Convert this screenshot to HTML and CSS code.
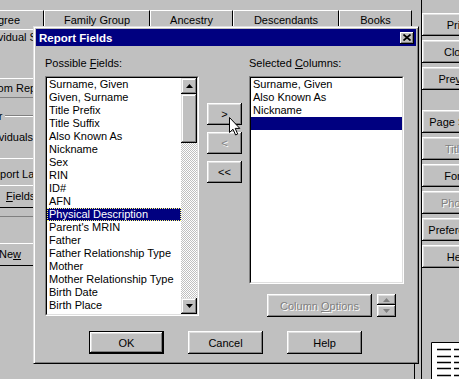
FILE: index.html
```html
<!DOCTYPE html>
<html>
<head>
<meta charset="utf-8">
<meta name="viewport" content="width=device-width, initial-scale=1.0"/>
<link rel="stylesheet" href="styles.css">
</head>
<body>
<div class="app">
    <div class="main">
        <div class="tabs">
            <div class="tab t-ped">Pedigree</div>
            <div class="tab t-fam">Family Group</div>
            <div class="tab t-anc">Ancestry</div>
            <div class="tab t-des">Descendants</div>
            <div class="tab t-bks">Books</div>
        </div>
        <div class="pane">
            <div class="side">
                <div class="tab2">Individual Summary</div>
                <div class="field">Custom Report</div>
                <div class="grp"><span>Filter</span><i class="etch"></i></div>
                <div class="lbl2">Individuals:</div>
                <div class="rpt">Report Layout</div>
                <div class="sbtn fields"><u>F</u>ields...</div>
                <div class="sline"></div>
                <div class="sbtn snew">Ne<u>w</u></div>
            </div>
        </div>
    </div>
    <div class="rightcol">
        <button class="btn rbtn">Print</button>
        <button class="btn rbtn">Close</button>
        <button class="btn rbtn"><span>Pre<u>v</u>iew</span></button>
        <button class="btn rbtn gap">Page Setup</button>
        <button class="btn rbtn off">Titles</button>
        <button class="btn rbtn">Fonts</button>
        <button class="btn rbtn off">Photos</button>
        <button class="btn rbtn">Preferences</button>
        <button class="btn rbtn">Help</button>
        <div class="doc">
            <svg width="28" height="39" viewBox="0 0 28 39">
                <rect x="0" y="0" width="28" height="39" fill="#fff"/>
                <path d="M0.5 39V0.5H28" stroke="#000" fill="none"/>
                <path d="M6 7.5h14M23 7.5h5M6 14.5h14M23 14.5h5M6 20.5h14M23 20.5h5M6 26.5h14M23 26.5h5M6 33.5h14M23 33.5h5" stroke="#000" stroke-width="1.4"/>
            </svg>
        </div>
    </div>
</div>

<div class="dialog">
    <div class="titlebar">
        <span>Report Fields</span>
        <span class="xbtn">
            <svg width="8" height="7" viewBox="0 0 8 7"><path d="M0.5 0.5L7.5 6.5M7.5 0.5L0.5 6.5" stroke="#000" stroke-width="1.7"/></svg>
        </span>
    </div>
    <div class="dbody">
        <div class="cols">
            <div class="col1">
                <div class="label">Possible <u>F</u>ields:</div>
                <div class="list l1">
                    <div class="list-in">
                        <div class="items">
                            <div class="item">Surname, Given</div>
                            <div class="item">Given, Surname</div>
                            <div class="item">Title Prefix</div>
                            <div class="item">Title Suffix</div>
                            <div class="item">Also Known As</div>
                            <div class="item">Nickname</div>
                            <div class="item">Sex</div>
                            <div class="item">RIN</div>
                            <div class="item">ID#</div>
                            <div class="item">AFN</div>
                            <div class="item sel">Physical Description</div>
                            <div class="item">Parent's MRIN</div>
                            <div class="item">Father</div>
                            <div class="item">Father Relationship Type</div>
                            <div class="item">Mother</div>
                            <div class="item">Mother Relationship Type</div>
                            <div class="item">Birth Date</div>
                            <div class="item">Birth Place</div>
                            <div class="item">Christening Date</div>
                        </div>
                        <div class="sbar">
                            <div class="sb-btn">
                                <svg width="7" height="4" viewBox="0 0 7 4"><path d="M3.5 0L7 4H0Z" fill="#000"/></svg>
                            </div>
                            <div class="thumb"></div>
                            <div class="track"></div>
                            <div class="sb-btn">
                                <svg width="7" height="4" viewBox="0 0 7 4"><path d="M0 0H7L3.5 4Z" fill="#000"/></svg>
                            </div>
                        </div>
                    </div>
                </div>
            </div>

            <div class="col2">
                <button class="btn mv">&gt;</button>
                <button class="btn mv off">&lt;</button>
                <button class="btn mv">&lt;&lt;</button>
            </div>

            <div class="col3">
                <div class="label">Selected <u>C</u>olumns:</div>
                <div class="list l2">
                    <div class="list-in">
                        <div class="item">Surname, Given</div>
                        <div class="item">Also Known As</div>
                        <div class="item">Nickname</div>
                        <div class="item sel2"></div>
                    </div>
                </div>
                <div class="optrow">
                    <button class="btn opt off"><span>Column <u>O</u>ptions</span></button>
                    <div class="spin">
                        <div class="btn sp">
                            <svg width="7" height="4" viewBox="0 0 7 4"><path d="M3.5 0L7 4H0Z" fill="#808080"/></svg>
                        </div>
                        <div class="btn sp sp2">
                            <svg width="7" height="4" viewBox="0 0 7 4"><path d="M0 0H7L3.5 4Z" fill="#808080"/></svg>
                        </div>
                    </div>
                </div>
            </div>
        </div>

        <div class="footer">
            <button class="btn fbtn def">OK</button>
            <button class="btn fbtn">Cancel</button>
            <button class="btn fbtn">Help</button>
        </div>
    </div>
</div>

<svg class="cursor" width="12" height="19" viewBox="0 0 12 19">
    <path d="M0.5 0.5V15.5L4 12.2L6.6 18L8.7 17L6.2 11.4H10.8Z" fill="#fff" stroke="#000" stroke-linejoin="miter"/>
</svg>
</body>
</html>
```

FILE: styles.css
```css
* {
    box-sizing: border-box;
}

body {
    margin: 0;
    width: 459px;
    height: 379px;
    overflow: hidden;
    position: relative;
    background: #c0c0c0;
    font: 11px "Liberation Sans", Arial, sans-serif;
    color: #000;
}

u {
    text-decoration: underline;
    text-underline-offset: 1px;
}

.btn {
    background: #c0c0c0;
    border: none;
    padding: 0;
    margin: 0;
    font: 11px "Liberation Sans", Arial, sans-serif;
    color: #000;
    box-shadow: inset -1px -1px #000, inset 1px 1px #fff, inset -2px -2px #808080, inset 2px 2px #dfdfdf;
    display: flex;
    align-items: center;
    justify-content: center;
    white-space: nowrap;
}

.off {
    color: #808080;
    text-shadow: 1px 1px #fff;
}

/* background window */

.app {
    display: flex;
    height: 379px;
}

.main {
    width: 421px;
    flex: none;
    display: flex;
    flex-direction: column;
}

.tabs {
    display: flex;
    height: 18px;
    margin: 10px 0 0 -48px;
}

.tab {
    flex: none;
    border-top: 1px solid #fff;
    border-left: 1px solid #fff;
    border-right: 1px solid #000;
    text-align: center;
    padding-top: 3px;
    line-height: 13px;
    white-space: nowrap;
}

.t-ped { width: 92px; }
.t-fam { width: 106px; }
.t-anc { width: 83px; }
.t-des { width: 106px; }
.t-bks { width: 73px; }

.pane {
    flex: 1;
    width: 415px;
    border-right: 1px solid #000;
}

.side {
    width: 34px;
    overflow: hidden;
    white-space: nowrap;
}

.tab2 {
    margin-top: 1px;
    height: 17px;
    border-top: 1px solid #fff;
    line-height: 15px;
    text-indent: -20px;
}

.field {
    margin-top: 32px;
    height: 20px;
    border-top: 1px solid #fff;
    border-bottom: 1px solid #808080;
    line-height: 18px;
    text-indent: -25px;
}

.grp {
    margin-top: 12px;
    height: 13px;
    display: flex;
    line-height: 13px;
}

.grp span {
    margin-left: -22px;
}

.etch {
    flex: 1;
    height: 2px;
    margin: 5px 0 0 3px;
    border-top: 1px solid #808080;
    border-bottom: 1px solid #fff;
}

.lbl2 {
    margin-top: 8px;
    line-height: 13px;
    text-indent: -19px;
}

.rpt {
    margin-top: 14px;
    height: 23px;
    padding-top: 9px;
    border-top: 1px solid #fff;
    line-height: 13px;
    text-indent: -14px;
}

.sbtn {
    height: 23px;
    padding-top: 4px;
    border-top: 1px solid #fff;
    border-bottom: 1px solid #000;
    line-height: 13px;
}

.fields {
    margin-top: 4px;
    padding-left: 6px;
}

.sline {
    margin-top: 8px;
    height: 1px;
    background: #808080;
}

.snew {
    margin-top: 26px;
    text-indent: -1px;
}

.rightcol {
    flex: 1;
    border-left: 1px solid #000;
    padding-top: 13px;
    display: flex;
    flex-direction: column;
    align-items: flex-start;
}

.rbtn {
    flex: none;
    width: 72px;
    height: 23px;
    margin-bottom: 4px;
}

.rbtn.gap {
    margin-top: 16px;
}

.doc {
    margin: 70px 0 0 9px;
    line-height: 0;
}

/* dialog */

.dialog {
    position: absolute;
    left: 33px;
    top: 26px;
    width: 386px;
    height: 338px;
    padding: 2px;
    background: #c0c0c0;
    border: 1px solid;
    border-color: #dfdfdf #000 #000 #dfdfdf;
    box-shadow: inset 1px 1px #fff, inset -1px -1px #808080;
}

.titlebar {
    height: 17px;
    background: #000080;
    color: #fff;
    font-weight: bold;
    font-size: 11.5px;
    display: flex;
    align-items: center;
    justify-content: space-between;
    padding: 0 2px 0 3px;
}

.xbtn {
    width: 14px;
    height: 12px;
    background: #c0c0c0;
    box-shadow: inset -1px -1px #000, inset 1px 1px #fff, inset -2px -2px #808080;
    display: flex;
    align-items: center;
    justify-content: center;
    padding: 0 1px 1px 0;
    line-height: 0;
}

.dbody {
    padding: 11px 0 0 9px;
}

.cols {
    display: flex;
    align-items: flex-start;
}

.col1 {
    width: 154px;
}

.label {
    height: 19px;
    line-height: 13px;
}

.list {
    border: 1px solid;
    border-color: #808080 #fff #fff #808080;
}

.list-in {
    height: 100%;
    overflow: hidden;
    background: #fff;
    border: 1px solid;
    border-color: #000 #dfdfdf #dfdfdf #000;
}

.l1 {
    height: 240px;
}

.l1 .list-in {
    display: flex;
}

.items {
    flex: 1;
    overflow: hidden;
}

.item {
    height: 13px;
    line-height: 13px;
    padding-left: 2px;
    white-space: nowrap;
}

.item.sel {
    background: #000080;
    color: #fff;
    outline: 1px dotted #ffff70;
    outline-offset: -1px;
}

.item.sel2 {
    background: #000080;
}

.sbar {
    width: 16px;
    display: flex;
    flex-direction: column;
}

.sb-btn,
.thumb {
    background: #c0c0c0;
    box-shadow: inset -1px -1px #000, inset 1px 1px #dfdfdf, inset -2px -2px #808080, inset 2px 2px #fff;
}

.sb-btn {
    height: 16px;
    display: flex;
    align-items: center;
    justify-content: center;
    line-height: 0;
}

.thumb {
    height: 49px;
}

.track {
    flex: 1;
    background-image: conic-gradient(#fff 25%, #c0c0c0 0 50%, #fff 0 75%, #c0c0c0 0);
    background-size: 2px 2px;
}

.col2 {
    width: 35px;
    margin: 46px 0 0 8px;
    display: flex;
    flex-direction: column;
    gap: 7px;
}

.mv {
    height: 22px;
}

.col3 {
    width: 155px;
    margin-left: 7px;
}

.l2 {
    height: 208px;
}

.optrow {
    display: flex;
    margin: 10px 0 0 18px;
}

.opt {
    width: 105px;
    height: 23px;
}

.spin {
    width: 19px;
    margin-left: 5px;
    display: flex;
    flex-direction: column;
}

.sp {
    height: 11px;
    line-height: 0;
}

.sp2 {
    height: 12px;
}

.footer {
    display: flex;
    gap: 24px;
    margin: 14px 0 0 44px;
}

.fbtn {
    width: 75px;
    height: 23px;
}

.fbtn.def {
    border: 1px solid #000;
}

.cursor {
    position: absolute;
    left: 229px;
    top: 117px;
}
```
